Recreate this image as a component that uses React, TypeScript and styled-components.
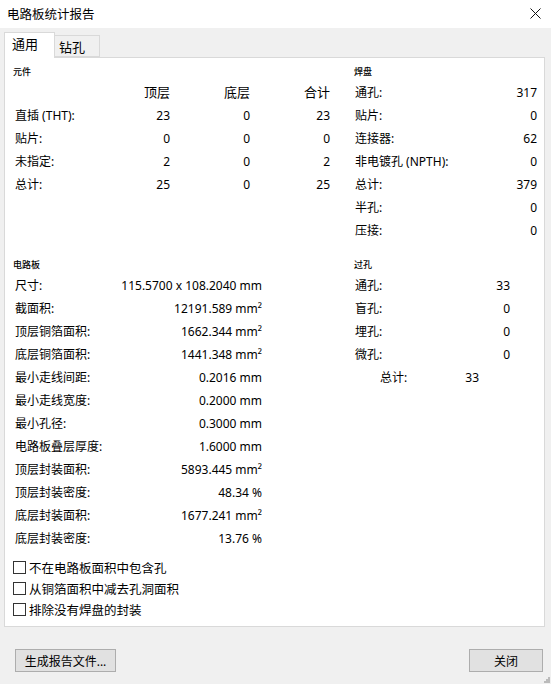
import React from "react"
import styled, { createGlobalStyle } from "styled-components"

const GlobalStyle = createGlobalStyle`
  html, body {
    margin: 0;
    padding: 0;
    background: #f0f0f0;
  }
  body {
    font-family: "Noto Sans", "Noto Sans CJK SC", sans-serif;
    font-size: 12px;
    color: #000;
  }
`

const Window = styled.div`
  width: 551px;
  height: 684px;
  background: #f0f0f0;
  display: flex;
  flex-direction: column;
  position: relative;
  overflow: hidden;
`

const TitleBar = styled.div`
  height: 28px;
  background: #fff;
  display: flex;
  align-items: center;
  justify-content: space-between;
  padding: 0 8px 2px 7px;
  box-sizing: border-box;
  font-size: 12.5px;
`

const CloseIcon = styled.svg`
  width: 11px;
  height: 11px;
  margin-right: 2px;
`

const Body = styled.div`
  flex: 1;
  display: flex;
  flex-direction: column;
  padding: 4px 6px 0 4px;
`

const TabStrip = styled.div`
  display: flex;
  align-items: flex-end;
  height: 25px;
  position: relative;
  z-index: 1;
`

const Tab = styled.div<{ $active?: boolean }>`
  box-sizing: border-box;
  height: ${(p) => (p.$active ? "26px" : "22px")};
  margin-bottom: ${(p) => (p.$active ? "-1px" : "0")};
  padding: ${(p) => (p.$active ? "0 0 4px 7px" : "0 0 0 4px")};
  width: ${(p) => (p.$active ? "51px" : "45px")};
  background: ${(p) => (p.$active ? "#fff" : "#f0f0f0")};
  border: 1px solid #d9d9d9;
  border-bottom: ${(p) => (p.$active ? "none" : "1px solid #d9d9d9")};
  border-left: ${(p) => (p.$active ? "1px solid #d9d9d9" : "none")};
  display: flex;
  align-items: center;
  font-size: 13px;
`

const Panel = styled.div`
  box-sizing: border-box;
  height: 570px;
  background: #fff;
  border: 1px solid #d9d9d9;
  padding: 5px 7px 0 8px;
  display: flex;
  flex-direction: column;
`

const SectionRow = styled.div<{ $gap?: number }>`
  display: grid;
  grid-template-columns: 341px 183px;
  margin-top: ${(p) => p.$gap ?? 0}px;
`

const Block = styled.div``

const Caption = styled.div`
  height: 18px;
  line-height: 18px;
  font-size: 9px;
  font-weight: 500;
`

const Row = styled.div<{ $cols: string }>`
  display: grid;
  grid-template-columns: ${(p) => p.$cols};
  height: 23px;
  line-height: 23px;
  white-space: nowrap;
`

const Label = styled.span<{ $pad?: number }>`
  padding-left: ${(p) => p.$pad ?? 2}px;
`

const Num = styled.span`
  text-align: right;
`

const HeaderCell = styled.span`
  text-align: right;
  font-size: 13px;
`

const Checks = styled.div`
  margin-top: 7px;
  display: flex;
  flex-direction: column;
`

const CheckRow = styled.label`
  display: flex;
  align-items: center;
  height: 21px;
  gap: 3px;
  font-size: 12.5px;
`

const Box = styled.span`
  width: 11px;
  height: 11px;
  border: 1px solid #333;
  background: #fff;
  display: inline-block;
`

const Footer = styled.div`
  display: flex;
  justify-content: space-between;
  padding: 22px 2px 0 11px;
`

const Button = styled.button<{ $w: number }>`
  width: ${(p) => p.$w}px;
  height: 23px;
  background: #e1e1e1;
  border: 1px solid #adadad;
  font-family: inherit;
  font-size: 12px;
  color: #000;
  padding: 0;
`

const Grip = styled.svg`
  position: absolute;
  right: 1px;
  bottom: 1px;
  width: 6px;
  height: 6px;
`

const parts = [
  ["直插 (THT):", "23", "0", "23"],
  ["贴片:", "0", "0", "0"],
  ["未指定:", "2", "0", "2"],
  ["总计:", "25", "0", "25"],
]

const pads = [
  ["通孔:", "317"],
  ["贴片:", "0"],
  ["连接器:", "62"],
  ["非电镀孔 (NPTH):", "0"],
  ["总计:", "379"],
  ["半孔:", "0"],
  ["压接:", "0"],
]

const board = [
  ["尺寸:", "115.5700 x 108.2040 mm"],
  ["截面积:", "12191.589 mm²"],
  ["顶层铜箔面积:", "1662.344 mm²"],
  ["底层铜箔面积:", "1441.348 mm²"],
  ["最小走线间距:", "0.2016 mm"],
  ["最小走线宽度:", "0.2000 mm"],
  ["最小孔径:", "0.3000 mm"],
  ["电路板叠层厚度:", "1.6000 mm"],
  ["顶层封装面积:", "5893.445 mm²"],
  ["顶层封装密度:", "48.34 %"],
  ["底层封装面积:", "1677.241 mm²"],
  ["底层封装密度:", "13.76 %"],
]

const vias = [
  ["通孔:", "33"],
  ["盲孔:", "0"],
  ["埋孔:", "0"],
  ["微孔:", "0"],
]

const options = ["不在电路板面积中包含孔", "从铜箔面积中减去孔洞面积", "排除没有焊盘的封装"]

const partCols = "77px 80px 80px 80px"

export default function App() {
  return (
    <>
      <GlobalStyle />
      <Window>
        <TitleBar>
          <span>电路板统计报告</span>
          <CloseIcon viewBox="0 0 11 11">
            <path d="M0.5 0.5 L10.5 10.5 M10.5 0.5 L0.5 10.5" stroke="#111" strokeWidth="1" />
          </CloseIcon>
        </TitleBar>
        <Body>
          <TabStrip>
            <Tab $active>通用</Tab>
            <Tab>钻孔</Tab>
          </TabStrip>
          <Panel>
            <SectionRow>
              <Block>
                <Caption>元件</Caption>
                <Row $cols={partCols}>
                  <span />
                  <HeaderCell>顶层</HeaderCell>
                  <HeaderCell>底层</HeaderCell>
                  <HeaderCell>合计</HeaderCell>
                </Row>
                {parts.map((r) => (
                  <Row key={r[0]} $cols={partCols}>
                    <Label>{r[0]}</Label>
                    <Num>{r[1]}</Num>
                    <Num>{r[2]}</Num>
                    <Num>{r[3]}</Num>
                  </Row>
                ))}
              </Block>
              <Block>
                <Caption>焊盘</Caption>
                {pads.map((r) => (
                  <Row key={r[0]} $cols="1fr auto">
                    <Label $pad={1}>{r[0]}</Label>
                    <Num>{r[1]}</Num>
                  </Row>
                ))}
              </Block>
            </SectionRow>
            <SectionRow $gap={14}>
              <Block>
                <Caption>电路板</Caption>
                {board.map((r) => (
                  <Row key={r[0]} $cols="1fr auto 92px">
                    <Label>{r[0]}</Label>
                    <Num>{r[1]}</Num>
                    <span />
                  </Row>
                ))}
              </Block>
              <Block>
                <Caption>过孔</Caption>
                {vias.map((r) => (
                  <Row key={r[0]} $cols="1fr auto 27px">
                    <Label $pad={1}>{r[0]}</Label>
                    <Num>{r[1]}</Num>
                    <span />
                  </Row>
                ))}
                <Row $cols="26px 72px 27px">
                  <span />
                  <span>总计:</span>
                  <Num>33</Num>
                </Row>
              </Block>
            </SectionRow>
            <Checks>
              {options.map((o) => (
                <CheckRow key={o}>
                  <Box />
                  {o}
                </CheckRow>
              ))}
            </Checks>
          </Panel>
          <Footer>
            <Button $w={101}>生成报告文件...</Button>
            <Button $w={74}>关闭</Button>
          </Footer>
        </Body>
        <Grip viewBox="0 0 6 6">
          <rect x="4" y="0" width="2" height="2" fill="#bbb" />
          <rect x="2" y="2" width="2" height="2" fill="#bbb" />
          <rect x="4" y="2" width="2" height="2" fill="#bbb" />
          <rect x="0" y="4" width="2" height="2" fill="#bbb" />
          <rect x="2" y="4" width="2" height="2" fill="#bbb" />
          <rect x="4" y="4" width="2" height="2" fill="#bbb" />
        </Grip>
      </Window>
    </>
  )
}
